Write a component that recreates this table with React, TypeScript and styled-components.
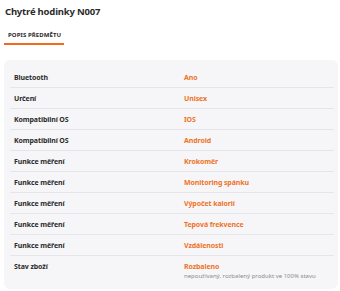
import React from "react";
import styled, { createGlobalStyle } from "styled-components";

const Global = createGlobalStyle`
  body {
    margin: 0;
    background: #ffffff;
    font-family: "Noto Sans", "Open Sans", sans-serif;
  }
`;

const Page = styled.div`
  padding: 5px 2px 0 4px;
`;

const Title = styled.h1`
  margin: 0 0 0 1px;
  font-size: 9.5px;
  line-height: 14px;
  font-weight: 700;
  color: #2b2b2b;
  letter-spacing: -0.2px;
`;

const Tabs = styled.div`
  display: flex;
  margin-top: 12px;
`;

const Tab = styled.div`
  padding: 0 3px 4px 4px;
  font-size: 6px;
  line-height: 8px;
  font-weight: 700;
  color: #2b2b2b;
  border-bottom: 2px solid #f26a1b;
  letter-spacing: 0.1px;
`;

const Panel = styled.div`
  margin-top: 15px;
  background: #f6f6f8;
  border-radius: 6px;
  padding: 7px 4px 8px 6px;
  height: 214px;
`;

const Row = styled.div<{ $last?: boolean }>`
  display: grid;
  grid-template-columns: 170px 1fr;
  align-items: start;
  height: 21px;
  box-sizing: border-box;
  padding: 6px 0 0 4px;
  border-bottom: ${(p) => (p.$last ? "none" : "1px solid #e6e6ea")};
`;

const Label = styled.div`
  font-size: 7px;
  line-height: 9px;
  font-weight: 700;
  color: #2b2b2b;
  letter-spacing: -0.1px;
`;

const Value = styled.div`
  font-size: 7px;
  line-height: 9px;
  font-weight: 700;
  color: #ee7327;
  letter-spacing: -0.1px;
`;

const Note = styled.div`
  margin-top: 2px;
  font-size: 6px;
  line-height: 7px;
  font-weight: 400;
  color: #8a8a8a;
`;

const rows = [
  ["Bluetooth", "Ano"],
  ["Určení", "Unisex"],
  ["Kompatibilní OS", "IOS"],
  ["Kompatibilní OS", "Android"],
  ["Funkce měření", "Krokoměr"],
  ["Funkce měření", "Monitoring spánku"],
  ["Funkce měření", "Výpočet kalorií"],
  ["Funkce měření", "Tepová frekvence"],
  ["Funkce měření", "Vzdálenosti"],
];

export default function App() {
  return (
    <Page>
      <Global />
      <Title>Chytré hodinky N007</Title>
      <Tabs>
        <Tab>POPIS PŘEDMĚTU</Tab>
      </Tabs>
      <Panel>
        {rows.map(([k, v], i) => (
          <Row key={i}>
            <Label>{k}</Label>
            <Value>{v}</Value>
          </Row>
        ))}
        <Row $last>
          <Label>Stav zboží</Label>
          <div>
            <Value>Rozbaleno</Value>
            <Note>nepoužívaný, rozbalený produkt ve 100% stavu</Note>
          </div>
        </Row>
      </Panel>
    </Page>
  );
}
